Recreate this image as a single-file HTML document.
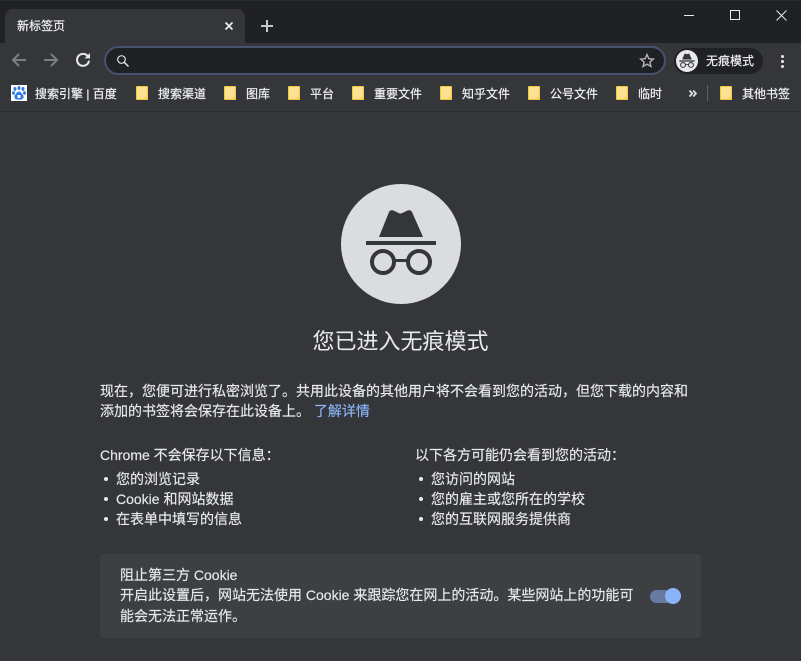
<!DOCTYPE html>
<html lang="zh-CN"><head><meta charset="utf-8"><title>新标签页</title>
<style>
html,body{margin:0;padding:0;width:801px;height:661px;overflow:hidden;background:#35363a}
body{position:relative;font-family:"Liberation Sans","Noto Sans CJK SC",sans-serif;color:#e8eaed}
.a{position:absolute;white-space:nowrap}
svg{position:absolute;display:block}
.bm{position:absolute;top:86px;height:16px;line-height:16px;font-size:12px;color:#f1f3f4;white-space:nowrap;-webkit-text-stroke:.2px #f1f3f4}
.fold{position:absolute;top:86px;width:12px;height:14px;background:#fde293;border:1px solid #f5c842;box-sizing:border-box;border-radius:1px}
.fold:after{content:"";position:absolute;right:-1px;bottom:-1px;width:3px;height:3px;background:#f5c842}
.t{position:absolute;white-space:nowrap;font-size:14px;line-height:20px;color:#e8eaed;-webkit-text-stroke:.15px #e8eaed}
.dot{position:absolute;width:4px;height:4px;border-radius:50%;background:#e8eaed}
</style></head><body>
<div class="a" style="left:0;top:0;width:801px;height:43px;background:#202124"></div>
<div class="a" style="left:0;top:0;width:801px;height:1px;background:#2b2c2f"></div>
<div class="a" style="left:5px;top:9px;width:240px;height:34px;background:#35363a;border-radius:8px 8px 0 0"></div>
<div class="a" style="left:17px;top:17px;font-size:12px;line-height:18px;color:#f1f3f4;-webkit-text-stroke:.2px #f1f3f4">新标签页</div>
<svg style="left:225px;top:22px" width="8" height="8" viewBox="0 0 8 8"><path d="M.5 .5L7.500 7.500M7.500 .5L.5 7.500" stroke="#e8eaed" stroke-width="1.800"/></svg>
<svg style="left:261px;top:20px" width="12" height="12" viewBox="0 0 12 12"><path d="M6 0V12M0 6H12" stroke="#c4c7cb" stroke-width="2"/></svg>
<svg style="left:684px;top:10px" width="11" height="11" viewBox="0 0 11 11"><path d="M0 5.500H10" stroke="#e8eaed"/></svg>
<svg style="left:730px;top:10px" width="11" height="11" viewBox="0 0 11 11"><rect x=".5" y=".5" width="9" height="9" fill="none" stroke="#e8eaed"/></svg>
<svg style="left:776px;top:10px" width="11" height="11" viewBox="0 0 11 11"><path d="M.5 .5L10.500 10.500M10.500 .5L.5 10.500" stroke="#e8eaed"/></svg>

<svg style="left:11px;top:52px" width="16" height="16" viewBox="0 0 16 16"><path d="M15 8H2M8 2L2 8L8 14" fill="none" stroke="#7c7e81" stroke-width="2"/></svg>
<svg style="left:43px;top:52px" width="16" height="16" viewBox="0 0 16 16"><path d="M1 8H14M8 2L14 8L8 14" fill="none" stroke="#7c7e81" stroke-width="2"/></svg>
<svg style="left:75px;top:52px" width="16" height="16" viewBox="0 0 16 16"><path d="M12.800 4.200A6 6 0 1 0 14 8.600" fill="none" stroke="#e8eaed" stroke-width="2"/><path d="M9.500 6.400H15V1Z" fill="#e8eaed"/></svg>

<div class="a" style="left:104px;top:46px;width:562px;height:29px;box-sizing:border-box;background:#202124;border:2px solid #47536e;border-radius:15px"></div>
<svg style="left:116px;top:54px" width="14" height="14" viewBox="0 0 14 14"><circle cx="5.500" cy="5.500" r="3.800" fill="none" stroke="#dfe1e5" stroke-width="1.200"/><path d="M8.300 8.300L12.500 12.500" stroke="#dfe1e5" stroke-width="1.500"/></svg>
<svg style="left:639px;top:53px" width="16" height="15" viewBox="0 0 16 15"><path d="M8 1.500L9.800 5.700L14.300 6.100L10.900 9.100L11.900 13.500L8 11.200L4.100 13.500L5.100 9.100L1.700 6.100L6.200 5.700Z" fill="none" stroke="#b4b6ba" stroke-width="1.400"/></svg>

<div class="a" style="left:674px;top:48px;width:89px;height:26px;background:#202124;border-radius:13px"></div>
<div class="a" style="left:676px;top:50px;width:22px;height:22px;background:#e8eaed;border-radius:50%"></div>
<svg style="left:676px;top:50px" width="22" height="22" viewBox="0 0 22 22"><g transform="translate(11 11) scale(.22) translate(-60 -60)"><path d="M48 28C49 26 51 26 53 26.700C56 28 58 29.500 59.500 29.500C61 29.500 63 28 66 26.700C68 26 70 26 71 28L82 53H38Z" fill="#35363a"/><rect x="25" y="57" width="70" height="6" fill="#35363a"/><circle cx="42" cy="78" r="11" fill="none" stroke="#35363a" stroke-width="5"/><circle cx="78" cy="78" r="11" fill="none" stroke="#35363a" stroke-width="5"/><path d="M53 76.500H67" stroke="#35363a" stroke-width="4"/></g></svg>
<div class="a" style="left:706px;top:53px;font-size:12px;line-height:17px;color:#f1f3f4;-webkit-text-stroke:.2px #f1f3f4">无痕模式</div>
<div class="dot" style="left:781px;top:55px;width:3px;height:3px"></div>
<div class="dot" style="left:781px;top:60px;width:3px;height:3px"></div>
<div class="dot" style="left:781px;top:65px;width:3px;height:3px"></div>

<svg style="left:11px;top:85px" width="16" height="16" viewBox="0 0 16 16"><rect width="16" height="16" fill="#fff"/><ellipse cx="4" cy="4" rx="1.500" ry="2" fill="#2f7bee"/><ellipse cx="8" cy="3" rx="1.500" ry="2" fill="#2f7bee"/><ellipse cx="12" cy="4" rx="1.500" ry="2" fill="#2f7bee"/><ellipse cx="2.500" cy="8" rx="1.500" ry="1.800" fill="#2f7bee"/><ellipse cx="13.500" cy="8" rx="1.500" ry="1.800" fill="#2f7bee"/><path d="M8 6.500C6 6.500 5.500 8.500 4 10C2.500 12 4 14.500 6 14.500H10C12 14.500 13.500 12 12 10C10.500 8.500 10 6.500 8 6.500Z" fill="#2f7bee"/><rect x="6.500" y="10" width="3" height="3" fill="#fff"/></svg>
<div class="bm" style="left:35px">搜索引擎 | 百度</div>
<div class="fold" style="left:136px"></div><div class="bm" style="left:158px">搜索渠道</div>
<div class="fold" style="left:224px"></div><div class="bm" style="left:246px">图库</div>
<div class="fold" style="left:288px"></div><div class="bm" style="left:310px">平台</div>
<div class="fold" style="left:352px"></div><div class="bm" style="left:374px">重要文件</div>
<div class="fold" style="left:440px"></div><div class="bm" style="left:462px">知乎文件</div>
<div class="fold" style="left:528px"></div><div class="bm" style="left:550px">公号文件</div>
<div class="fold" style="left:616px"></div><div class="bm" style="left:638px">临时</div>
<svg style="left:688px;top:89px" width="10" height="9" viewBox="0 0 10 9"><path d="M1.500 1.500L4.300 4.500L1.500 7.500M5.200 1.500L8 4.500L5.200 7.500" fill="none" stroke="#dfe1e5" stroke-width="1.700"/></svg>
<div class="a" style="left:707px;top:85px;width:1px;height:16px;background:#5f6368"></div>
<div class="fold" style="left:720px"></div><div class="bm" style="left:742px">其他书签</div>
<div class="a" style="left:0;top:111px;width:801px;height:1px;background:#2a2b2e"></div>

<div class="a" style="left:341px;top:184px;width:120px;height:120px;border-radius:50%;background:#dadce0"></div>
<svg style="left:341px;top:184px" width="120" height="120" viewBox="0 0 120 120"><path d="M48 28C49 26 51 26 53 26.700C56 28 58 29.500 59.500 29.500C61 29.500 63 28 66 26.700C68 26 70 26 71 28L82 53H38Z" fill="#35363a"/><rect x="25" y="57" width="70" height="4" fill="#35363a"/><circle cx="42" cy="78" r="11" fill="none" stroke="#35363a" stroke-width="4"/><circle cx="78" cy="78" r="11" fill="none" stroke="#35363a" stroke-width="4"/><path d="M53 76.500H67" stroke="#35363a" stroke-width="3"/></svg>

<div class="a" style="left:0;top:326px;width:801px;text-align:center;font-size:22px;line-height:32px;color:#e8eaed">您已进入无痕模式</div>
<div class="t" style="left:100px;top:381px">现在，您便可进行私密浏览了。共用此设备的其他用户将不会看到您的活动，但您下载的内容和</div>
<div class="t" style="left:100px;top:401px">添加的书签将会保存在此设备上。 <span style="color:#8ab4f8;-webkit-text-stroke:.15px #8ab4f8">了解详情</span></div>
<div class="t" style="left:100px;top:445px">Chrome 不会保存以下信息：</div>
<div class="t" style="left:415px;top:445px">以下各方可能仍会看到您的活动：</div>
<div class="dot" style="left:104px;top:477px"></div><div class="t" style="left:116px;top:469px">您的浏览记录</div>
<div class="dot" style="left:104px;top:497px"></div><div class="t" style="left:116px;top:489px">Cookie 和网站数据</div>
<div class="dot" style="left:104px;top:517px"></div><div class="t" style="left:116px;top:509px">在表单中填写的信息</div>
<div class="dot" style="left:419px;top:477px"></div><div class="t" style="left:431px;top:469px">您访问的网站</div>
<div class="dot" style="left:419px;top:497px"></div><div class="t" style="left:431px;top:489px">您的雇主或您所在的学校</div>
<div class="dot" style="left:419px;top:517px"></div><div class="t" style="left:431px;top:509px">您的互联网服务提供商</div>

<div class="a" style="left:100px;top:554px;width:601px;height:84px;background:#3c4043;border-radius:4px"></div>
<div class="t" style="left:120px;top:565px">阻止第三方 Cookie</div>
<div class="t" style="left:120px;top:585px">开启此设置后，网站无法使用 Cookie 来跟踪您在网上的活动。某些网站上的功能可</div>
<div class="t" style="left:120px;top:606px">能会无法正常运作。</div>
<div class="a" style="left:650px;top:590px;width:30px;height:13px;border-radius:7px;background:#667aa2"></div>
<div class="a" style="left:665px;top:588px;width:16px;height:16px;border-radius:50%;background:#8ab4f8"></div>
</body></html>
